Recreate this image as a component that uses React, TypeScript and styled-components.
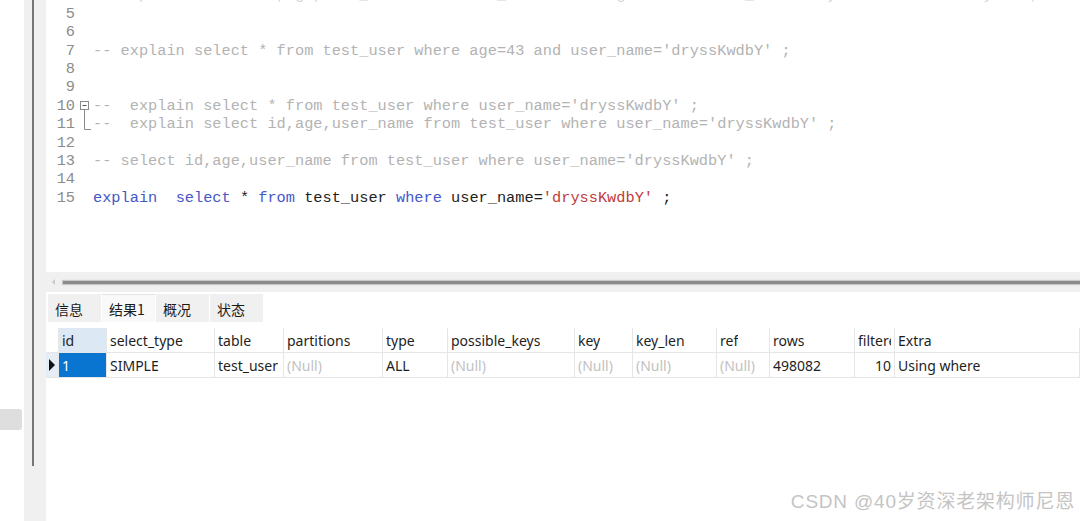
import React from 'react';
import styled, { createGlobalStyle } from 'styled-components';

const GlobalStyle = createGlobalStyle`
  html, body {
    margin: 0;
    padding: 0;
    background: #ffffff;
  }
  body {
    width: 1080px;
    height: 521px;
    overflow: hidden;
    font-family: 'Noto Sans', 'Noto Sans CJK SC', sans-serif;
  }
`;

const Screen = styled.div`
  position: relative;
  display: flex;
  width: 1080px;
  height: 521px;
  overflow: hidden;
  background: #ffffff;
`;

const OuterMargin = styled.div`
  width: 24px;
  padding-top: 409px;
  box-sizing: border-box;
`;

const SideTab = styled.div`
  width: 22px;
  height: 21px;
  background: #dedede;
  border-radius: 0 3px 3px 0;
`;

const GrayRail = styled.div`
  width: 22px;
  background: #f0f0f0;
  padding-left: 8px;
  box-sizing: border-box;
`;

const RailLine = styled.div`
  width: 2px;
  height: 466px;
  background: #767676;
`;

const Main = styled.div`
  flex: 1;
  display: flex;
  flex-direction: column;
  min-width: 0;
`;

/* ---------- editor ---------- */

const Editor = styled.div`
  height: 272px;
  overflow: hidden;
  background: #ffffff;
`;

const CodeLines = styled.div`
  margin-top: -13.6px;
  font-family: 'Liberation Mono', 'Courier New', monospace;
  font-size: 15.3px;
  line-height: 18.4px;
`;

const LineRow = styled.div<{ $faint?: boolean }>`
  display: flex;
  height: 18.4px;
  white-space: pre;
  opacity: ${(p) => (p.$faint ? 0.55 : 1)};
`;

const LineNo = styled.span`
  width: 29px;
  text-align: right;
  color: #8c8c8c;
  flex-shrink: 0;
`;

const FoldCell = styled.span`
  width: 18px;
  flex-shrink: 0;
`;

const Tok = styled.span<{ $kind: 'comment' | 'kw' | 'str' | 'plain' }>`
  color: ${(p) =>
    p.$kind === 'comment'
      ? '#b3b3b3'
      : p.$kind === 'kw'
      ? '#4657c9'
      : p.$kind === 'str'
      ? '#c23b3b'
      : '#1e1e1e'};
`;

function FoldMark({ kind }: { kind?: 'open' | 'end' }): JSX.Element {
  return (
    <FoldCell>
      {kind === 'open' && (
        <svg width="18" height="18" viewBox="0 0 18 18" style={{ display: 'block' }}>
          <rect x="5.5" y="4.5" width="8" height="8" fill="#fff" stroke="#8a8a8a" />
          <line x1="7.5" y1="8.5" x2="11.5" y2="8.5" stroke="#555" />
          <line x1="9.5" y1="12.5" x2="9.5" y2="18" stroke="#8a8a8a" />
        </svg>
      )}
      {kind === 'end' && (
        <svg width="18" height="18" viewBox="0 0 18 18" style={{ display: 'block' }}>
          <line x1="9.5" y1="0" x2="9.5" y2="14.5" stroke="#8a8a8a" />
          <line x1="9.5" y1="14.5" x2="16" y2="14.5" stroke="#8a8a8a" />
        </svg>
      )}
    </FoldCell>
  );
}

type Token = [string, 'comment' | 'kw' | 'str' | 'plain'];

const codeLines: { n: number; fold?: 'open' | 'end'; faint?: boolean; toks: Token[] }[] = [
  {
    n: 4,
    faint: true,
    toks: [
      [
        "-- explain select id,age,user_name from test_user where age=43 and user_name='dryssKwdbY' order by id ;",
        'comment',
      ],
    ],
  },
  { n: 5, toks: [] },
  { n: 6, toks: [] },
  {
    n: 7,
    toks: [["-- explain select * from test_user where age=43 and user_name='dryssKwdbY' ;", 'comment']],
  },
  { n: 8, toks: [] },
  { n: 9, toks: [] },
  {
    n: 10,
    fold: 'open',
    toks: [["--  explain select * from test_user where user_name='dryssKwdbY' ;", 'comment']],
  },
  {
    n: 11,
    fold: 'end',
    toks: [
      ["--  explain select id,age,user_name from test_user where user_name='dryssKwdbY' ;", 'comment'],
    ],
  },
  { n: 12, toks: [] },
  {
    n: 13,
    toks: [["-- select id,age,user_name from test_user where user_name='dryssKwdbY' ;", 'comment']],
  },
  { n: 14, toks: [] },
  {
    n: 15,
    toks: [
      ['explain', 'kw'],
      ['  ', 'plain'],
      ['select', 'kw'],
      [' * ', 'plain'],
      ['from', 'kw'],
      [' test_user ', 'plain'],
      ['where', 'kw'],
      [' user_name=', 'plain'],
      ["'dryssKwdbY'", 'str'],
      [' ;', 'plain'],
    ],
  },
];

/* ---------- scrollbar ---------- */

const HScroll = styled.div`
  height: 20px;
  background: #f0f0f0;
  display: flex;
  align-items: center;
  padding-left: 6px;
`;

const ScrollArrow = styled.span`
  width: 0;
  height: 0;
  border-top: 3px solid transparent;
  border-bottom: 3px solid transparent;
  border-right: 3px solid #c8c8c8;
`;

const ScrollThumb = styled.div`
  flex: 1;
  height: 3px;
  margin-left: 8px;
  background: #8a8a8a;
  box-shadow: 0 0 1px 1px #c9c9c9;
`;

/* ---------- tabs ---------- */

const TabBar = styled.div`
  display: flex;
  margin-top: 2px;
  height: 28px;
  padding-left: 2px;
`;

const Tab = styled.div<{ $active?: boolean }>`
  width: 54px;
  padding-left: 7px;
  box-sizing: border-box;
  display: flex;
  align-items: center;
  font-family: 'Noto Sans CJK SC', 'Noto Sans', sans-serif;
  font-size: 14px;
  color: #1a1a1a;
  background: ${(p) => (p.$active ? '#f9f9f9' : '#f0f0f0')};
  border-right: 1px solid #ffffff;
  border-top: 1px solid ${(p) => (p.$active ? '#e4e4e4' : '#f0f0f0')};
`;

/* ---------- grid ---------- */

const Grid = styled.div`
  margin-top: 6px;
  font-family: 'Noto Sans', 'Noto Sans CJK SC', sans-serif;
  font-size: 14px;
  color: #1e1e1e;
`;

const GridRow = styled.div`
  display: flex;
  height: 25px;
  border-bottom: 1px solid #e6e6e6;
  box-sizing: border-box;
`;

const Indicator = styled.div<{ $current?: boolean }>`
  width: 13px;
  flex-shrink: 0;
  box-sizing: border-box;
  display: flex;
  align-items: center;
  padding-left: 3px;
  background: ${(p) => (p.$current ? '#e4edf6' : '#ffffff')};
  border-right: 1px solid #e6e6e6;
`;

const Arrow = styled.span`
  width: 0;
  height: 0;
  border-top: 6px solid transparent;
  border-bottom: 6px solid transparent;
  border-left: 6px solid #111111;
`;

const Cell = styled.div<{ $w?: number; $tone?: 'head' | 'selected' | 'null'; $right?: boolean }>`
  width: ${(p) => (p.$w ? `${p.$w}px` : 'auto')};
  flex: ${(p) => (p.$w ? '0 0 auto' : '1')};
  box-sizing: border-box;
  padding: 0 3px;
  display: flex;
  align-items: center;
  justify-content: ${(p) => (p.$right ? 'flex-end' : 'flex-start')};
  overflow: hidden;
  white-space: nowrap;
  border-right: 1px solid #e6e6e6;
  background: ${(p) =>
    p.$tone === 'head' ? '#dce8f4' : p.$tone === 'selected' ? '#0a74d1' : 'transparent'};
  color: ${(p) =>
    p.$tone === 'selected' ? '#ffffff' : p.$tone === 'null' ? '#c2c2c2' : '#1e1e1e'};
`;

const CellText = styled.span`
  display: block;
  max-width: 100%;
  overflow: hidden;
  text-overflow: clip;
`;

const columns: { name: string; w?: number }[] = [
  { name: 'id', w: 48 },
  { name: 'select_type', w: 108 },
  { name: 'table', w: 69 },
  { name: 'partitions', w: 99 },
  { name: 'type', w: 65 },
  { name: 'possible_keys', w: 127 },
  { name: 'key', w: 58 },
  { name: 'key_len', w: 84 },
  { name: 'ref', w: 53 },
  { name: 'rows', w: 85 },
  { name: 'filtered', w: 40 },
  { name: 'Extra' },
];

const rowValues: (string | null)[] = [
  '1',
  'SIMPLE',
  'test_user',
  null,
  'ALL',
  null,
  null,
  null,
  null,
  '498082',
  '10',
  'Using where',
];

const Watermark = styled.div`
  position: absolute;
  right: 5px;
  bottom: 8px;
  font-family: 'Liberation Sans', 'Noto Sans CJK SC', sans-serif;
  font-size: 19px;
  color: #c4c4c4;
  letter-spacing: 0.8px;
`;

export default function App(): JSX.Element {
  return (
    <Screen>
      <GlobalStyle />
      <OuterMargin>
        <SideTab />
      </OuterMargin>
      <GrayRail>
        <RailLine />
      </GrayRail>
      <Main>
        <Editor>
          <CodeLines>
            {codeLines.map((line) => (
              <LineRow key={line.n} $faint={line.faint}>
                <LineNo>{line.n}</LineNo>
                <FoldMark kind={line.fold} />
                {line.toks.map(([text, kind], i) => (
                  <Tok key={i} $kind={kind}>
                    {text}
                  </Tok>
                ))}
              </LineRow>
            ))}
          </CodeLines>
        </Editor>
        <HScroll>
          <ScrollArrow />
          <ScrollThumb />
        </HScroll>
        <TabBar>
          <Tab>信息</Tab>
          <Tab $active>结果1</Tab>
          <Tab>概况</Tab>
          <Tab>状态</Tab>
        </TabBar>
        <Grid>
          <GridRow>
            <Indicator />
            {columns.map((c, i) => (
              <Cell key={c.name} $w={c.w} $tone={i === 0 ? 'head' : undefined}>
                <CellText>{c.name}</CellText>
              </Cell>
            ))}
          </GridRow>
          <GridRow>
            <Indicator $current>
              <Arrow />
            </Indicator>
            {rowValues.map((v, i) => (
              <Cell
                key={i}
                $w={columns[i].w}
                $tone={i === 0 ? 'selected' : v === null ? 'null' : undefined}
                $right={columns[i].name === 'filtered'}
              >
                <CellText>{v ?? '(Null)'}</CellText>
              </Cell>
            ))}
          </GridRow>
        </Grid>
      </Main>
      <Watermark>CSDN @40岁资深老架构师尼恩</Watermark>
    </Screen>
  );
}
